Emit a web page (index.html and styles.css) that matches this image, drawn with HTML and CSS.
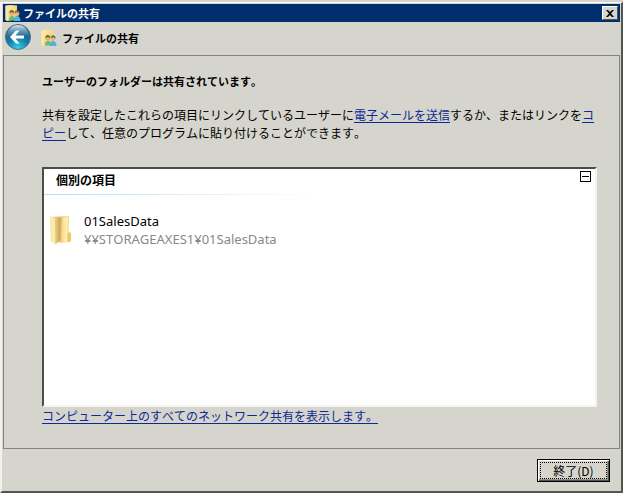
FILE: index.html
```html
<!DOCTYPE html>
<html lang="ja">
<head>
<meta charset="utf-8">
<meta name="viewport" content="width=device-width, initial-scale=1">
<title>ファイルの共有</title>
<link rel="stylesheet" href="styles.css">
</head>
<body>
<svg class="defs" aria-hidden="true">
  <defs>
    <linearGradient id="paper" x1="0" x2="1" y1="0" y2="1"><stop offset="0" stop-color="#fff0a8"/><stop offset="1" stop-color="#edc653"/></linearGradient>
    <linearGradient id="inside" x1="0" x2="1"><stop offset="0" stop-color="#f0d68c"/><stop offset=".55" stop-color="#cfaa58"/><stop offset="1" stop-color="#ead08a"/></linearGradient>
    <linearGradient id="flap" x1="0" x2="1"><stop offset="0" stop-color="#f2cf77"/><stop offset=".6" stop-color="#fdefb4"/><stop offset="1" stop-color="#f0cf72"/></linearGradient>
    <radialGradient id="orb" cx=".5" cy=".95" r=".9"><stop offset="0" stop-color="#35d3e8"/><stop offset=".45" stop-color="#1681ad"/><stop offset="1" stop-color="#174b78"/></radialGradient>
    <linearGradient id="shine" x1="0" x2="0" y1="0" y2="1"><stop offset="0" stop-color="#dcebf3"/><stop offset="1" stop-color="#4b84ab" stop-opacity=".3"/></linearGradient>
    <symbol id="share" viewBox="0 0 16 16">
      <path d="M.500.500 5 0l7 .5V14l-9 2-2.500-1z" fill="url(#paper)"/>
      <path d="M.500.500 3 2.500V16l-2.500-1z" fill="#f9e9a6"/>
      <path d="M4 15.500c0-3 1-4.500 3-4.500s3 1.500 3 4.500z" fill="#62b98a"/>
      <path d="M9 16c0-3.500 1-5 3-5s3.500 1.500 3.500 5z" fill="#4fb4d8"/>
      <circle cx="6.800" cy="8.500" r="2.300" fill="#dfae7c"/>
      <path d="M4.300 8c0-4 5-4 5 0L7 7z" fill="#6b6142"/>
      <circle cx="12" cy="8.800" r="2.400" fill="#e6b685"/>
      <path d="M9.500 8.300c0-4 5-4 5.200.2L12 7.300z" fill="#7a6744"/>
    </symbol>
  </defs>
</svg>
<main class="window">
  <header class="titlebar">
    <svg class="icon16" aria-hidden="true"><use href="#share"/></svg>
    <span class="title">ファイルの共有</span>
    <button class="close" type="button" aria-label="閉じる"><svg viewBox="0 0 8 7" width="8" height="7"><path d="M0 0h2l2 2 2-2h2L5 3.500 8 7H6L4 5 2 7H0l3-3.500z"/></svg></button>
  </header>
  <div class="nav">
    <button class="back" type="button" aria-label="戻る">
      <svg viewBox="0 0 26 26" width="26" height="26">
        <circle cx="13" cy="13" r="12.500" fill="url(#orb)" stroke="#48738f"/>
        <path d="M2 12a11 11 0 0 1 22 0c-5-2-15-2-22 1z" fill="url(#shine)"/>
        <path d="M5 13l6-6.500h3.500L10.500 11.500H19v3h-8.500l4 5H11z" fill="#fff"/>
      </svg>
    </button>
    <svg class="icon16" aria-hidden="true"><use href="#share"/></svg>
    <h1 class="heading">ファイルの共有</h1>
  </div>
  <section class="page">
    <h2 class="heading">ユーザーのフォルダーは共有されています。</h2>
    <p class="intro">共有を設定したこれらの項目にリンクしているユーザーに<a href="#mail">電子メールを送信</a>するか、またはリンクを<a href="#copy">コピー</a>して、任意のプログラムに貼り付けることができます。</p>
    <div class="list">
      <div class="group">
        <h3>個別の項目</h3>
        <button class="collapse" type="button" aria-label="折りたたむ"></button>
      </div>
      <div class="item">
        <svg viewBox="0 0 24 32" width="24" height="32" aria-hidden="true">
          <path d="M2 3 20 2v24l-13 3z" fill="#e5c270"/>
          <path d="M6 4l8-1v22l-7 4z" fill="url(#inside)"/>
          <path d="M13 3l6-1 1 1v15l2 2v6l-1 2-10 1 1-2z" fill="url(#flap)"/>
          <path d="M1 2l5 2 1 1v25.500L1.500 27z" fill="#fbeaae"/>
          <path d="M6.500 5 7 30.500" stroke="#e0bd68" stroke-width=".8"/>
          <path d="M18.500 19.500l2-1.500 1.500 2v6l-1.500 2h-2z" fill="#efc75c"/>
        </svg>
        <div class="names"><span>01SalesData</span><span class="path">¥¥STORAGEAXES1¥01SalesData</span></div>
      </div>
    </div>
    <a class="all" href="#shares">コンピューター上のすべてのネットワーク共有を表示します。</a>
  </section>
  <footer class="actions"><button class="finish" type="button"><span>終了(D)</span></button></footer>
</main>
</body>
</html>
```
FILE: styles.css
```css
* { box-sizing: border-box; }

body {
  margin: 0;
  background: #d6d5cd;
  color: #000;
  font: 12px/18px "Noto Sans CJK JP", "Liberation Sans", sans-serif;
  font-kerning: none;
}

h1, h2, h3, p { margin: 0; font-size: 12px; }
button { padding: 0; font: inherit; color: #000; }
a { color: #0c2a92; text-underline-offset: 2px; }

.defs { position: absolute; width: 0; height: 0; }

.window {
  display: flex;
  flex-direction: column;
  min-height: calc(100vh - 2px);
  margin-top: 2px;
  padding: 1px 1px 0 0;
  border: 1px solid #fff;
  border-width: 1px 2px 2px 2px;
  border-right-color: #55554f;
  border-bottom-color: #55554f;
  border-left-color: #f2f1ec;
}

.titlebar {
  display: flex;
  align-items: center;
  height: 18px;
  margin-left: 1px;
  padding: 0 2px;
  background: #002d6b;
  color: #fff;
}

.icon16 { flex: none; width: 16px; height: 16px; }
.title { flex: 1; margin-left: 2px; font-size: 11px; font-weight: 700; }
.heading { font-size: 11px; font-weight: 700; }

.close {
  display: grid;
  place-items: center;
  width: 16px;
  height: 14px;
  border: 1px solid #fff;
  border-right-color: #55554f;
  border-bottom-color: #55554f;
  background: #d6d5cd;
}

.nav { display: flex; align-items: center; height: 33px; padding: 0 3px 2px; }
.back { width: 26px; height: 26px; margin-top: -2px; border: 0; border-radius: 50%; background: none; }
.back svg { display: block; }
.nav .icon16 { margin: 1px 5px 0 10px; }

.page {
  flex: 1;
  margin-left: 1px;
  padding: 16px 22px 0 38px;
  border: 1px solid #84847e;
}

.intro { margin: 16px 0 25px; font-weight: 400; }

.list {
  height: 240px;
  border: 2px solid #4c4c48;
  border-right-color: #f4f4f0;
  border-bottom-color: #f4f4f0;
  background: #fff;
}

.group {
  display: flex;
  justify-content: space-between;
  height: 26px;
  padding: 2px 4px 0 12px;
  background: linear-gradient(to right, #b9def5, #fff 50%) bottom / 100% 1px no-repeat;
}

.collapse {
  width: 11px;
  height: 11px;
  border: 1px solid #000;
  background: linear-gradient(#000, #000) center / 7px 1px no-repeat #fff;
}

.item { display: flex; gap: 11px; align-items: center; margin: 17px 0 0 5px; }
.names { display: flex; flex-direction: column; font-family: "Noto Sans", "Noto Sans CJK JP", sans-serif; font-size: 13px; }
.path { color: #88888a; }
.all { display: inline-block; }

.actions { display: flex; justify-content: flex-end; align-items: center; height: 42px; padding-right: 10px; }

.finish {
  width: 73px;
  height: 23px;
  padding: 2px;
  border: 1px solid #000;
  background: #d6d5cd;
  box-shadow: inset 1px 1px #fff, inset -1px -1px #55554f, inset -2px -2px #96968e;
}

.finish span { display: block; border: 1px dotted #000; line-height: 15px; }
```
